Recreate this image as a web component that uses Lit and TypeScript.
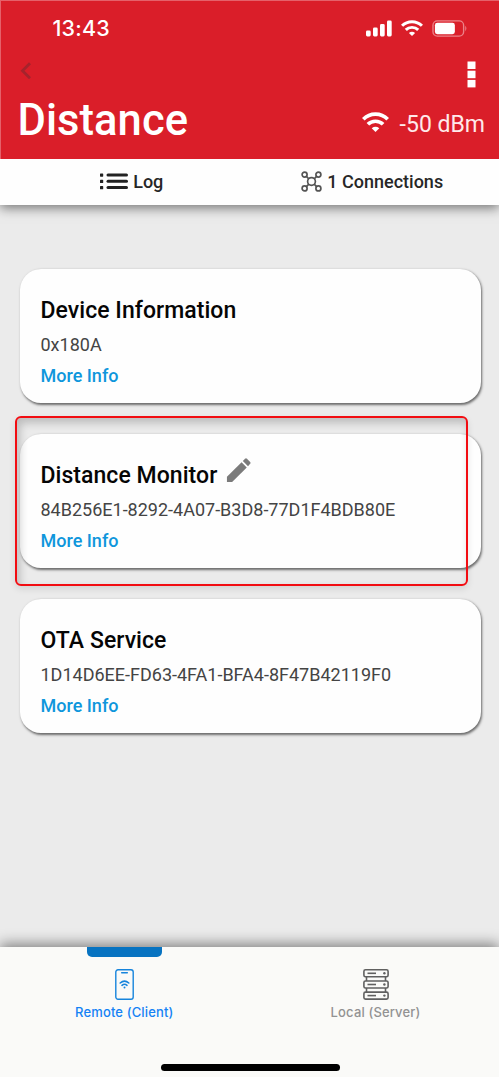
import { LitElement, html, css, svg, nothing } from 'lit';
import { customElement, property } from 'lit/decorators.js';

interface Service {
  name: string;
  uuid: string;
  editable?: boolean;
  marked?: boolean;
}

const services: Service[] = [
  { name: 'Device Information', uuid: '0x180A' },
  { name: 'Distance Monitor', uuid: '84B256E1-8292-4A07-B3D8-77D1F4BDB80E', editable: true, marked: true },
  { name: 'OTA Service', uuid: '1D14D6EE-FD63-4FA1-BFA4-8F47B42119F0' },
];

const wifi = (w: number, h: number) => html`
  <svg width=${w} height=${h} viewBox="0 0 27 20" preserveAspectRatio="none" fill="none" stroke="#fff" stroke-width="3.7">
    <path d="M1.3 7.3C8 .4 19 .4 25.700 7.300" />
    <path d="M5.900 12.300C10 8.200 17 8.200 21.100 12.300" />
    <path d="M9.700 16.200Q13.500 13.300 17.300 16.200L13.500 20Z" fill="#fff" stroke="none" />
  </svg>`;

@customElement('service-card')
export class ServiceCard extends LitElement {
  @property({ attribute: false }) service!: Service;

  static styles = css`
    :host { display: block; position: relative; }
    .card {
      box-sizing: border-box;
      height: 134px;
      padding: 27px 20.500px 0;
      background: #fefefe;
      border-radius: 21px;
      box-shadow: 1px 1.500px 2.500px rgba(0, 0, 0, 0.55);
    }
    .name {
      display: flex;
      height: 30px;
      font: 500 23px/30px Roboto, sans-serif;
      letter-spacing: 0.050px;
      color: #050505;
    }
    .pencil { margin: -3px 0 0 8.500px; }
    .uuid {
      margin-top: 6px;
      font: 400 18px/26px Roboto, sans-serif;
      color: #444;
      white-space: nowrap;
    }
    .more {
      margin-top: 5px;
      font: 500 18px/26px Roboto, sans-serif;
      color: #0f96dc;
    }
    .mark {
      position: absolute;
      box-sizing: border-box;
      left: -5px;
      top: -18px;
      width: 453px;
      height: 170.500px;
      border: 2px solid #f20d12;
      border-radius: 6px;
      box-shadow: inset 3px 5px 8px rgba(0, 0, 0, 0.2), 0 3px 7px rgba(0, 0, 0, 0.1);
    }
  `;

  render() {
    const s = this.service;
    return html`
      <div class="card">
        <div class="name">${s.name}${s.editable
          ? html`<svg class="pencil" width="25" height="25" viewBox="0 0 26 26" fill="#7b7b7b">
              <path d="M1 25V19.600L16.200 4.400L21.600 9.800L6.400 25Z" />
              <path d="M17.500 3.100L19.800.8Q20.800-.1 21.800.8L25.100 4.100Q26 5.100 25.100 6.100L22.900 8.500Z" />
            </svg>`
          : nothing}</div>
        <div class="uuid">${s.uuid}</div>
        <div class="more">More Info</div>
      </div>
      ${s.marked ? html`<div class="mark"></div>` : nothing}
    `;
  }
}

@customElement('app-root')
export class AppRoot extends LitElement {
  static styles = css`
    :host {
      display: flex;
      flex-direction: column;
      box-sizing: border-box;
      height: 1079px;
      overflow: hidden;
      background: #ebebeb;
      font-family: Roboto, sans-serif;
    }
    svg { display: block; flex: none; }
    header {
      position: relative;
      z-index: 1;
      box-sizing: border-box;
      flex: none;
      height: 158.500px;
      background: #da1e29;
      color: #fff;
      border-top: 1px solid #e5616a;
      border-left: 1px solid #e5616a;
    }
    .status, .nav, .heading { display: flex; justify-content: space-between; }
    .status { height: 54px; padding: 0 31px 0 51.500px; align-items: center; }
    .time { font: 550 21.500px/26px Inter, sans-serif; letter-spacing: 0.200px; }
    .indicators { display: flex; align-items: center; gap: 9px; }
    .nav { height: 40px; padding: 6px 23.500px 0 18.500px; box-sizing: border-box; }
    .chevron { margin-top: 1px; }
    .heading { padding: 0 14px 0 16.500px; }
    h1 { margin: 1px 0 0; font: 500 43.500px/50px Roboto, sans-serif; letter-spacing: 0.060px; }
    .signal { display: flex; align-items: center; gap: 10px; height: 26px; margin-top: 16px; font-size: 23px; color: #ffe9ea; }
    .signal svg { margin: -5px 1px 0 0; }
    .tabs {
      position: relative;
      flex: none;
      display: grid;
      grid-template-columns: 1fr 1fr;
      height: 46.500px;
      background: #fefefe;
      box-shadow: 0 3px 11px rgba(0, 0, 0, 0.5);
      font: 500 18px/26px Roboto, sans-serif;
      color: #272727;
    }
    .tab { display: flex; align-items: center; justify-content: center; gap: 5px; }
    .tab.log { padding-left: 14px; }
    .tab.conn { padding-right: 4px; }
    main { flex: 1; display: flex; flex-direction: column; gap: 30.800px; padding: 64px 18.500px 0 20px; }
    footer {
      position: relative;
      flex: none;
      box-sizing: border-box;
      height: 132px;
      background: #fafaf8;
      border-bottom: 2px solid #fff;
      box-shadow: 0 -3px 13px rgba(0, 0, 0, 0.46);
      display: flex;
      flex-direction: column;
    }
    .modes { display: grid; grid-template-columns: 248.500px 254px; height: 116px; }
    .mode {
      display: flex;
      flex-direction: column;
      align-items: center;
      font: 500 13px/18px Inter, sans-serif;
      letter-spacing: 0.150px;
      color: #929292;
    }
    .active { color: #1482f5; }
    .bar { width: 75px; height: 10px; margin-bottom: 12px; border-radius: 0 0 5px 5px; }
    .active .bar { background: #0773c1; }
    .mode svg { margin-bottom: 3px; }
    .home { align-self: center; width: 179px; height: 7px; margin: 1px 0 0 2px; border-radius: 4px; background: #000; }
  `;

  render() {
    return html`
      <header>
        <div class="status">
          <span class="time">13:43</span>
          <div class="indicators">
            <svg width="26" height="17" viewBox="0 0 26 17" fill="#fff">
              <rect x="0" y="10.500" width="4.700" height="6" rx="1.400" />
              <rect x="7" y="7.500" width="4.700" height="9" rx="1.400" />
              <rect x="14" y="4" width="4.700" height="12.500" rx="1.400" />
              <rect x="21" y="0.500" width="4.700" height="16" rx="1.400" />
            </svg>
            ${wifi(22, 16)}
            <svg width="36" height="17" viewBox="0 0 37 17">
              <rect x="1" y=".7" width="31.500" height="15.600" rx="4.500" fill="none" stroke="#eb8288" stroke-width="1.400" />
              <rect x="3" y="2.700" width="20.500" height="11.600" rx="2.500" fill="#fff" />
              <path d="M34.200 5.700Q36.500 8.400 34.200 11.200Z" fill="#eb8288" />
            </svg>
          </div>
        </div>
        <div class="nav">
          <svg class="chevron" width="12" height="17" viewBox="0 0 12 17" fill="none" stroke="#a5232c" stroke-width="2.800">
            <path d="M10 1.200L2.500 8.800L10 16.200" />
          </svg>
          <svg width="9" height="27" viewBox="0 0 9 27" fill="#fff">
            ${[0.5, 9.7, 18.9].map((y) => svg`<rect x=".5" y=${y} width="8" height="7.500" />`)}
          </svg>
        </div>
        <div class="heading">
          <h1>Distance</h1>
          <div class="signal">${wifi(27, 20)}<span>-50 dBm</span></div>
        </div>
      </header>
      <nav class="tabs">
        <div class="tab log">
          <svg width="28" height="17" viewBox="0 0 28 17" fill="#222">
            ${[0.5, 6.8, 13.1].map((y) => svg`<rect x="0" y=${y} width="3.200" height="3.200" rx=".6" /><rect x="6.500" y=${y} width="21.500" height="3" rx="1.500" />`)}
          </svg>
          <span>Log</span>
        </div>
        <div class="tab conn">
          <svg width="21" height="21" viewBox="0 0 21 21" fill="none" stroke="#555" stroke-width="1.700">
            <circle cx="10.500" cy="10.500" r="3.900" />
            ${[[3.6, 3.6], [17.4, 3.6], [3.6, 17.4], [17.4, 17.4]].map(([x, y]) => svg`<circle cx=${x} cy=${y} r="2.500" />`)}
            <path d="M5.400 5.400L7.800 7.800M15.600 5.400L13.200 7.800M5.400 15.600L7.800 13.200M15.600 15.600L13.200 13.200" />
          </svg>
          <span>1 Connections</span>
        </div>
      </nav>
      <main>${services.map((s) => html`<service-card .service=${s}></service-card>`)}</main>
      <footer>
        <div class="modes">
          <div class="mode active">
            <div class="bar"></div>
            <svg width="19" height="31" viewBox="0 0 19 31" fill="none" stroke="#1684dc" stroke-width="1.400" stroke-linecap="round">
              <rect x=".8" y=".8" width="17.400" height="29.400" rx="2.200" />
              <path d="M6.700 3.800H12.300" stroke-width="1.500" />
              <path d="M5.200 14Q9.500 10.300 13.800 14M7 16.300Q9.500 14.200 12 16.300" stroke-width="1.600" />
              <circle cx="9.500" cy="18.500" r="1" fill="#1684dc" stroke="none" />
            </svg>
            <span>Remote (Client)</span>
          </div>
          <div class="mode">
            <div class="bar"></div>
            <svg width="26" height="31" viewBox="0 0 26 31" fill="none" stroke="#606060" stroke-width="1.600">
              ${[0.8, 12, 23.1].map((y) => svg`
                <rect x=".9" y=${y} width="24.200" height="7" rx="1.600" />
                <path d=${`M4.500 ${y + 3.5}H13`} />
                <circle cx="21.400" cy=${y + 3.5} r="1.200" fill="#606060" stroke="none" />`)}
              <path d="M3.500 7.800V12M22.500 7.800V12M3.500 19V23M22.500 19V23" />
            </svg>
            <span>Local (Server)</span>
          </div>
        </div>
        <div class="home"></div>
      </footer>
    `;
  }
}
